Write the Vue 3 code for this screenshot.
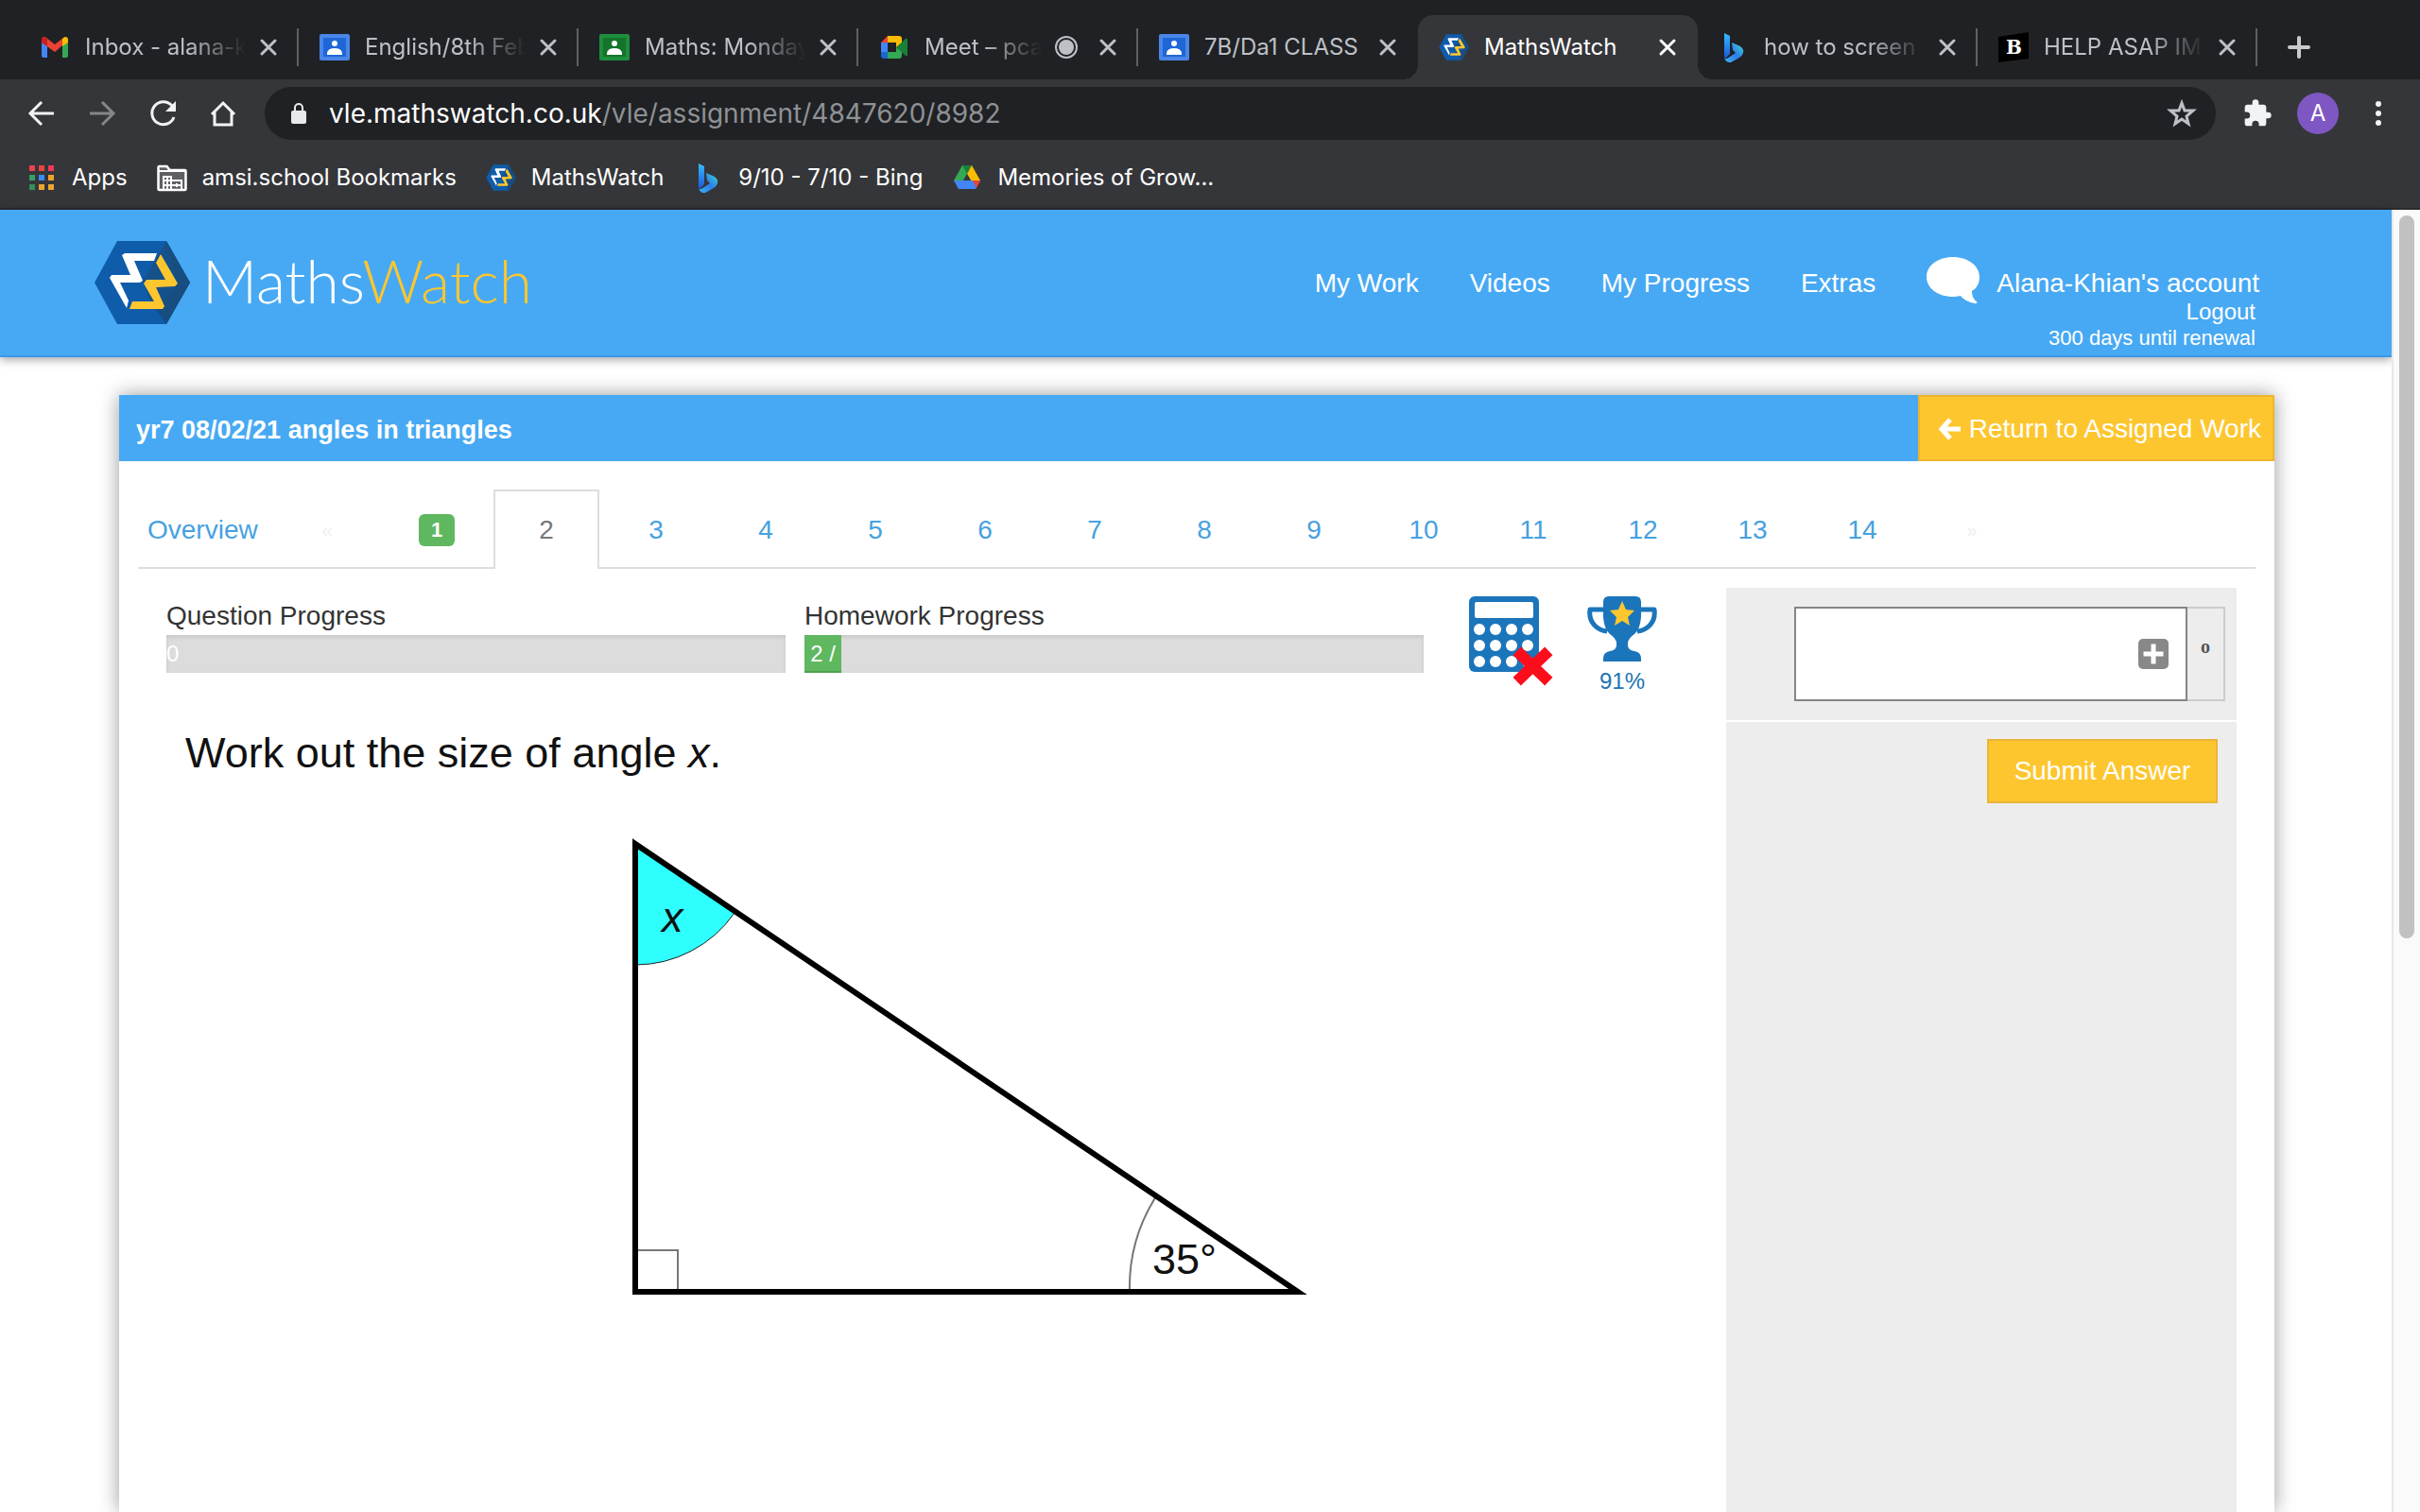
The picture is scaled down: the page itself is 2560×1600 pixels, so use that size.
<script setup>
import { ref } from 'vue'

const tabs = [
  { title: 'Inbox - alana-k', icon: 'gmail', fade: true },
  { title: 'English/8th Feb', icon: 'class-blue', fade: true },
  { title: 'Maths: Monday', icon: 'class-green', fade: true },
  { title: 'Meet – pca', icon: 'meet', fade: true, recording: true },
  { title: '7B/Da1 CLASS', icon: 'class-blue' },
  { title: 'MathsWatch', icon: 'maths', active: true },
  { title: 'how to screen', icon: 'bing', fade: true },
  { title: 'HELP ASAP IM', icon: 'brainly', fade: true },
]

const bookmarks = [
  { title: 'Apps', icon: 'apps' },
  { title: 'amsi.school Bookmarks', icon: 'folder' },
  { title: 'MathsWatch', icon: 'maths' },
  { title: '9/10 - 7/10 - Bing', icon: 'bing' },
  { title: 'Memories of Grow...', icon: 'drive' },
]

const menu = ['My Work', 'Videos', 'My Progress', 'Extras']
const questions = Array.from({ length: 14 }, (_, i) => i + 1)
const current = 2
const answer = ref('')
const progress = [
  { label: 'Question Progress', text: '0', percent: 0 },
  { label: 'Homework Progress', text: '2 /', percent: 6 },
]
const keys = [0, 1, 2, 3, 4, 5, 6, 7, 8, 9, 10, 11]
const appColors = ['#ea4350', '#e8453c', '#f2385a', '#34a065', '#3b8cf0', '#f0a030', '#34905a', '#eda52c', '#eda52c']
</script>

<template>
  <div class="window">
    <svg class="defs" aria-hidden="true">
      <defs>
        <linearGradient id="bingStem" x1="0" y1="0" x2="0" y2="1">
          <stop offset="0" stop-color="#37bdff" />
          <stop offset="1" stop-color="#1b56d8" />
        </linearGradient>
        <linearGradient id="bingBowl" x1="0" y1="1" x2="1" y2="0">
          <stop offset="0" stop-color="#3fb4f5" />
          <stop offset="0.5" stop-color="#2b7de9" />
          <stop offset="1" stop-color="#3fdcd0" />
        </linearGradient>
        <symbol id="gmail" viewBox="0 0 32 32">
          <path d="M2 9v16a2 2 0 0 0 2 2h4V13z" fill="#4285f4" />
          <path d="M30 9v16a2 2 0 0 1-2 2h-4V13z" fill="#34a853" />
          <path d="M2 8c0-3 3-4 5-2l9 7 9-7-1 8-8 7-14-10z" fill="#ea4335" />
          <path d="M24 7l1-1c2-2 5-1 5 2v3l-6 4z" fill="#fbbc04" />
          <path d="M8 7L7 6C5 4 2 5 2 8v3l6 4z" fill="#c5221f" />
        </symbol>
        <symbol id="class-blue" viewBox="0 0 32 32">
          <rect y="2" width="32" height="28" rx="2" fill="#4a86e8" />
          <rect x="4" y="6" width="24" height="20" fill="#1f66d6" />
          <circle cx="16" cy="12" r="3" fill="#fff" />
          <path d="M8 24v-2q1-5 8-5t8 5v2z" fill="#fff" />
        </symbol>
        <symbol id="class-green" viewBox="0 0 32 32">
          <rect y="2" width="32" height="28" rx="2" fill="#1e8e3e" />
          <rect x="4" y="6" width="24" height="20" fill="#14742c" />
          <circle cx="16" cy="12" r="3" fill="#fff" />
          <path d="M8 24v-2q1-5 8-5t8 5v2z" fill="#fff" />
        </symbol>
        <symbol id="meet" viewBox="0 0 32 32">
          <path d="M2 11l7-7v7z" fill="#ea4335" />
          <path d="M2 11h7v10H2z" fill="#4285f4" />
          <path d="M2 21h7v7H5q-3 0-3-3z" fill="#1967d2" />
          <path d="M9 4h12q3 0 3 3v8l-6 1v-5H9z" fill="#fbbc04" />
          <path d="M9 21h9v-5l6 1v8q0 3-3 3H9z" fill="#34a853" />
          <path d="M18 16l10-9q2-1 2 1v16q0 2-2 1z" fill="#188038" />
        </symbol>
        <symbol id="maths" viewBox="0 0 102 90">
          <path d="M25 1H77L102 45 77 89H25L1 45z" fill="#0f5cab" />
          <path d="M77 1L102 45 77 89 69 74 88 47z" fill="#184e80" />
          <path d="M77 1L52 43 60 66 77 89 102 45z" fill="#184e80" opacity=".75" />
          <path d="M30 16l3-2h34l-3 8H43l9 21-3 2H28l9 19-2 8-18-32 2-3h20z" fill="#fff" />
          <path d="M71 15l-5 9 10 18H56l-3 4 11 19H41l-3 8h35l2-3-9-20 20-1 3-3z" fill="#fdc62f" />
        </symbol>
        <symbol id="bing" viewBox="0 0 32 32">
          <path d="M6 1l6 3v19l-5 5q-1-1-1-3z" fill="url(#bingStem)" />
          <path d="M14 11l9 4q4 3 3 7-1 3-4 5l-9 5q-4 1-7-4 2 1 6-2l6-4-3-3z" fill="url(#bingBowl)" />
        </symbol>
        <symbol id="brainly" viewBox="0 0 32 32">
          <path d="M0 5L32 0V28L0 32z" fill="#000" />
          <text x="8" y="23" class="brand-b">B</text>
        </symbol>
        <symbol id="folder" viewBox="0 0 32 32">
          <path d="M1.500 28V5q0-1 1-1h8l3 4h16q1 0 1 1v19q0 1-1 1h-27q-1 0-1-1z" fill="#5f6064" stroke="#fff" stroke-width="2.500" />
          <path d="M2 9h28" stroke="#fff" stroke-width="2" />
          <path d="M7 28V15h8v13M11 15v13M7 19h8M7 24h19M15 19h11v9M21 22v4" stroke="#fff" stroke-width="2" fill="none" />
        </symbol>
        <symbol id="drive" viewBox="0 0 32 32">
          <path d="M11 3h10L8 27 2 19z" fill="#34a853" />
          <path d="M11 3h10l-5 9z" fill="#188038" />
          <path d="M21 3l9 16H20l-4-7z" fill="#fbbc04" />
          <path d="M2 19h28l-5 9H7z" fill="#4285f4" />
          <path d="M22 19h8l-4 8z" fill="#ea4335" />
          <path d="M16 12l4 7h-8z" fill="#35363a" />
        </symbol>
        <symbol id="apps" viewBox="0 0 32 32">
          <rect v-for="(c, i) in appColors" :key="i" :x="3 + (i % 3) * 10" :y="3 + Math.floor(i / 3) * 10" width="6" height="6" :fill="c" />
        </symbol>
      </defs>
    </svg>

    <header class="chrome">
      <div class="tab-strip">
        <div v-for="(tab, i) in tabs" :key="i" class="tab" :class="{ active: tab.active, bare: i === 4 }">
          <svg class="icon"><use :href="'#' + tab.icon" /></svg>
          <span class="tab-title" :class="{ fade: tab.fade }">{{ tab.title }}</span>
          <svg v-if="tab.recording" class="record" viewBox="0 0 24 24">
            <circle cx="12" cy="12" r="11" fill="none" stroke="currentColor" stroke-width="2" />
            <circle cx="12" cy="12" r="8" fill="currentColor" />
          </svg>
          <button class="close" aria-label="Close tab">
            <svg viewBox="0 0 20 20"><path d="M3 3l14 14M17 3L3 17" /></svg>
          </button>
        </div>
        <button class="new-tab" aria-label="New tab">
          <svg viewBox="0 0 24 24"><path d="M12 2v20M2 12h20" /></svg>
        </button>
      </div>

      <div class="toolbar">
        <button class="tool" aria-label="Back">
          <svg viewBox="0 0 32 32"><path class="line" d="M29 16H4M16 4L4 16l12 12" /></svg>
        </button>
        <button class="tool dim" aria-label="Forward">
          <svg viewBox="0 0 32 32"><path class="line" d="M3 16h25M16 4l12 12-12 12" /></svg>
        </button>
        <button class="tool" aria-label="Reload">
          <svg viewBox="0 0 32 32"><path class="line" d="M28 20A12 12 0 1 1 26 8" /><path d="M30 3v11H19z" /></svg>
        </button>
        <button class="tool" aria-label="Home">
          <svg viewBox="0 0 32 32"><path class="line" d="M4 17L16 5l12 12M7 15v13h18V15" /></svg>
        </button>
        <div class="omnibox">
          <svg class="lock" viewBox="0 0 24 24">
            <rect x="4" y="9" width="16" height="14" rx="2" />
            <path d="M8 10V6a4 4 0 0 1 8 0v4" fill="none" stroke="currentColor" stroke-width="2" />
          </svg>
          <span class="url"><b>vle.mathswatch.co.uk</b>/vle/assignment/4847620/8982</span>
          <button class="star" aria-label="Bookmark this page">
            <svg viewBox="0 0 32 32"><path d="M16 5l3 8h9l-7 6 2 8-7-5-7 5 2-8-7-6h9z" /></svg>
          </button>
        </div>
        <div class="tools-right">
          <button class="tool" aria-label="Extensions">
            <svg viewBox="0 0 24 24"><path d="M20.500 11H19V7c0-1.100-.9-2-2-2h-4V3.500a2.500 2.500 0 0 0-5 0V5H4c-1.100 0-2 .9-2 2v3.800h1.500a2.700 2.700 0 0 1 0 5.400H2V20c0 1.100.9 2 2 2h3.800v-1.500a2.700 2.700 0 0 1 5.400 0V22H17c1.100 0 2-.9 2-2v-4h1.500a2.500 2.500 0 0 0 0-5z" /></svg>
          </button>
          <button class="avatar">A</button>
          <button class="tool" aria-label="Menu">
            <svg viewBox="0 0 32 32"><circle cx="16" cy="6" r="3" /><circle cx="16" cy="16" r="3" /><circle cx="16" cy="26" r="3" /></svg>
          </button>
        </div>
      </div>

      <nav class="bookmarks">
        <a v-for="b in bookmarks" :key="b.title" href="#">
          <svg class="icon"><use :href="'#' + b.icon" /></svg>{{ b.title }}
        </a>
      </nav>
    </header>

    <div class="viewport">
      <div class="page">
        <header class="site-header">
          <a class="brand" href="#">
            <svg class="brand-mark"><use href="#maths" /></svg>
            <span>Maths<em>Watch</em></span>
          </a>
          <nav class="site-nav">
            <a v-for="m in menu" :key="m" class="link" href="#">{{ m }}</a>
            <div class="account">
              <svg class="bubble" viewBox="0 0 56 50">
                <path d="M28 0c15.500 0 28 9 28 21 0 7-3 12-8 15 0 5 2 9 5 11 1 1 0 3-2 2-6-1-12-4-15-8q-4 1-8 1C12 42 0 33 0 21S12 0 28 0z" />
              </svg>
              <div class="account-links">
                <a class="link" href="#">Alana-Khian's account</a>
                <a class="logout" href="#">Logout</a>
                <span class="renewal">300 days until renewal</span>
              </div>
            </div>
          </nav>
        </header>

        <main class="card">
          <div class="card-head">
            <h1>yr7 08/02/21 angles in triangles</h1>
            <button class="return">
              <svg viewBox="0 0 24 24"><path d="M12 2L3 12l9 10M4 12h19" /></svg>
              Return to Assigned Work
            </button>
          </div>

          <nav class="questions">
            <a class="overview" href="#">Overview</a>
            <span class="q arrow">«</span>
            <a v-for="n in questions" :key="n" class="q" :class="{ current: n === current }" href="#">
              <span v-if="n === 1" class="badge">{{ n }}</span>
              <template v-else>{{ n }}</template>
            </a>
            <span class="q arrow">»</span>
          </nav>

          <div class="work">
            <section class="question">
              <div class="status">
                <div v-for="p in progress" :key="p.label" class="progress">
                  <span>{{ p.label }}</span>
                  <div class="bar" role="progressbar" :aria-label="p.label" :aria-valuenow="p.percent">
                    <div class="fill" :class="{ empty: !p.percent }" :style="{ width: p.percent + '%' }">{{ p.text }}</div>
                  </div>
                </div>
                <svg class="calculator" viewBox="0 0 90 96">
                  <rect width="74" height="80" rx="6" fill="#1b75bb" />
                  <rect x="6" y="6" width="62" height="17" rx="2" fill="#fff" />
                  <circle v-for="k in keys" :key="k" :cx="11 + (k % 4) * 17" :cy="35 + Math.floor(k / 4) * 17" r="6" fill="#fff" />
                  <path d="M55 62L80 86M80 62L55 86" stroke="#fc0d1b" stroke-width="12" stroke-linecap="square" />
                </svg>
                <div class="score">
                  <svg viewBox="0 0 76 70">
                    <path d="M18 14H4c-2 14 8 22 18 23M58 14h14c2 14-8 22-18 23" fill="none" stroke="#1b75bb" stroke-width="5" stroke-linejoin="round" />
                    <path d="M18 6q0-6 6-6h28q6 0 6 6v16q-1 13-7 18-6 4-7 9v3q0 5 7 6 7 1 7 8v3H18v-3q0-7 7-8 7-1 7-6v-3q-1-5-7-9-6-5-7-18z" fill="#1b75bb" />
                    <path d="M38 5l4 9 9 1-7 7 2 9-8-5-8 5 2-9-7-7 9-1z" fill="#fdc62f" />
                  </svg>
                  <span>91%</span>
                </div>
              </div>

              <p class="prompt">Work out the size of angle <i>x</i>.</p>

              <svg class="figure" viewBox="660 880 730 500">
                <path d="M672 891V1020A128 128 0 0 0 777 965z" fill="#2efefe" />
                <path d="M672 1020A128 128 0 0 0 777 965" fill="none" stroke="#222" stroke-width="1" />
                <path d="M672 1322H717V1366" fill="none" stroke="#777" stroke-width="2" />
                <path d="M1195 1366A180 180 0 0 1 1223 1265" fill="none" stroke="#777" stroke-width="2" />
                <path d="M672 892V1366H1373z" fill="none" stroke="#000" stroke-width="6" />
                <text x="700" y="985" class="angle-x">x</text>
                <text x="1219" y="1347">35°</text>
              </svg>
            </section>

            <aside class="answer">
              <div class="answer-row">
                <div class="field">
                  <input v-model="answer" type="text" aria-label="Answer" />
                  <button class="plus" aria-label="Open keypad">
                    <svg viewBox="0 0 32 32"><path d="M16 5.500v21M5.500 16h21" /></svg>
                  </button>
                </div>
                <span class="unit">o</span>
              </div>
              <div class="submit-row">
                <button class="submit">Submit Answer</button>
              </div>
            </aside>
          </div>
        </main>
      </div>
      <div class="scrollbar"><div class="thumb"></div></div>
    </div>
  </div>
</template>

<style>
body {
  margin: 0;
  background: #fff;
}
</style>

<style scoped>
.window {
  display: flex;
  flex-direction: column;
  height: 100vh;
  overflow: hidden;
  font-family: "Liberation Sans", Arial, sans-serif;
  font-size: 28px;
  line-height: 32px;
  color: #333;
}
.defs {
  position: absolute;
  width: 0;
  height: 0;
}
.brand-b {
  font: bold 20px "DejaVu Serif", serif;
  fill: #fff;
}
a {
  color: inherit;
  text-decoration: none;
}
button {
  display: flex;
  align-items: center;
  justify-content: center;
  margin: 0;
  padding: 0;
  border: 0;
  background: none;
  color: inherit;
  font: inherit;
}
.icon {
  flex: none;
  width: 32px;
  height: 32px;
}

/* Browser chrome */
.chrome {
  flex: none;
  background: #35363a;
  color: #fff;
  font-family: Inter, "Liberation Sans", sans-serif;
  font-size: 24px;
}
.tab-strip {
  display: flex;
  box-sizing: border-box;
  height: 84px;
  padding: 16px 0 0 20px;
  background: #202124;
}
.tab {
  position: relative;
  display: flex;
  flex: 0 1 296px;
  align-items: center;
  box-sizing: border-box;
  min-width: 0;
  padding: 0 22px;
  color: #bdc1c6;
}
.tab::after {
  content: "";
  position: absolute;
  right: 0;
  top: 14px;
  width: 2px;
  height: 40px;
  background: #5f6165;
}
.tab.bare::after {
  display: none;
}
.tab.active {
  border-radius: 16px 16px 0 0;
  background: #35363a;
  color: #fff;
}
.tab.active::before,
.tab.active::after {
  content: "";
  position: absolute;
  top: auto;
  bottom: 0;
  width: 16px;
  height: 16px;
}
.tab.active::before {
  left: -16px;
  background: radial-gradient(circle at 0 0, #202124 16px, #35363a 16px);
}
.tab.active::after {
  right: -16px;
  background: radial-gradient(circle at 100% 0, #202124 16px, #35363a 16px);
}
.tab-title {
  flex: 1;
  min-width: 0;
  margin: 0 14px 0 16px;
  overflow: hidden;
  white-space: nowrap;
}
.fade {
  mask-image: linear-gradient(to left, transparent, #000 60px);
}
.record {
  flex: none;
  width: 24px;
  height: 24px;
  margin-right: 22px;
}
.close svg {
  width: 20px;
  height: 20px;
  fill: none;
  stroke: currentColor;
  stroke-width: 3;
  stroke-linecap: round;
}
.new-tab {
  margin-left: 32px;
  color: #c8cacd;
}
.new-tab svg {
  width: 24px;
  height: 24px;
  fill: none;
  stroke: currentColor;
  stroke-width: 4;
  stroke-linecap: round;
}
.toolbar {
  display: flex;
  align-items: center;
  gap: 24px;
  height: 72px;
  padding: 0 24px;
}
.tool,
.star {
  flex: none;
  width: 40px;
  height: 40px;
  color: #f1f3f4;
}
.tool svg,
.star svg {
  width: 32px;
  height: 32px;
  fill: currentColor;
}
.tool .line {
  fill: none;
  stroke: currentColor;
  stroke-width: 3;
}
.tool.dim {
  color: #85868a;
}
.omnibox {
  display: flex;
  flex: 1;
  align-items: center;
  height: 56px;
  padding: 0 16px 0 24px;
  border-radius: 28px;
  background: #202124;
}
.lock {
  flex: none;
  width: 24px;
  height: 24px;
  margin-right: 20px;
  fill: #e8eaed;
  color: #e8eaed;
}
.url {
  flex: 1;
  color: #8e9195;
  font-size: 28px;
}
.url b {
  color: #fff;
  font-weight: 400;
}
.star svg path {
  fill: none;
  stroke: #bdc1c6;
  stroke-width: 3;
}
.tools-right {
  display: flex;
  align-items: center;
  gap: 22px;
}
.avatar {
  width: 44px;
  height: 44px;
  border-radius: 50%;
  background: #7e57c2;
}
.bookmarks {
  display: flex;
  align-items: center;
  gap: 31px;
  box-sizing: border-box;
  height: 66px;
  padding: 0 28px;
  border-bottom: 2px solid #2a2b2d;
}
.bookmarks a {
  display: flex;
  align-items: center;
  gap: 16px;
}

/* Page */
.viewport {
  display: flex;
  flex: 1;
  min-height: 0;
}
.page {
  display: flex;
  flex: 1;
  flex-direction: column;
  gap: 40px;
  min-width: 0;
}
.scrollbar {
  box-sizing: border-box;
  width: 30px;
  padding: 6px;
  border-left: 2px solid #e8e8e8;
  background: #fafafa;
}
.thumb {
  width: 16px;
  height: 56%;
  border-radius: 8px;
  background: #c1c1c1;
}
.site-header {
  display: flex;
  align-items: center;
  justify-content: space-between;
  box-sizing: border-box;
  height: 156px;
  padding: 0 140px 0 98px;
  border-bottom: 2px solid #3a9ae8;
  background: #47a9f3;
  box-shadow: 0 2px 10px rgba(0, 0, 0, 0.4);
  color: #fff;
}
.brand {
  display: flex;
  align-items: center;
  gap: 12px;
  font-family: Lato, sans-serif;
  font-size: 64px;
  font-weight: 300;
  line-height: 72px;
}
.brand span {
  padding-bottom: 4px;
}
.brand em {
  color: #fdc62f;
  font-style: normal;
}
.brand-mark {
  width: 104px;
  height: 90px;
}
.site-nav {
  display: flex;
  align-self: flex-start;
  align-items: flex-start;
  gap: 54px;
  padding-top: 50px;
}
.link {
  padding-top: 12px;
}
.account {
  display: flex;
  gap: 18px;
}
.bubble {
  width: 56px;
  height: 50px;
  fill: #fff;
}
.account-links {
  display: flex;
  flex-direction: column;
  align-items: flex-end;
}
.logout,
.renewal {
  padding-right: 4px;
  line-height: 28px;
}
.logout {
  font-size: 24px;
}
.renewal {
  font-size: 22px;
}
.card {
  display: flex;
  flex: 1;
  flex-direction: column;
  margin: 0 124px 0 126px;
  background: #fff;
  box-shadow: 0 0 20px rgba(0, 0, 0, 0.4);
}
.card-head {
  display: flex;
  justify-content: space-between;
  height: 70px;
  background: #47a9f3;
  color: #fff;
}
.card-head h1 {
  margin: 0;
  padding-left: 18px;
  font-size: 27px;
  line-height: 74px;
}
.return {
  gap: 8px;
  padding: 2px 12px 0 20px;
  border: 2px solid #eeb430;
  background: #fdc62f;
  color: #fff;
}
.return svg {
  width: 24px;
  height: 24px;
  fill: none;
  stroke: currentColor;
  stroke-width: 5;
}
.questions {
  display: flex;
  gap: 4px;
  margin: 30px 20px 0;
  border-bottom: 2px solid #ddd;
  color: #47a1e0;
  line-height: 78px;
}
.overview {
  width: 140px;
  box-sizing: border-box;
  padding: 4px 0 0 10px;
}
.q {
  box-sizing: border-box;
  width: 112px;
  padding-top: 4px;
  text-align: center;
}
.arrow {
  color: #eee;
  font-size: 20px;
}
.current {
  margin-bottom: -2px;
  padding-top: 2px;
  border: 2px solid #ddd;
  border-bottom: 0;
  background: #fff;
  color: #777;
}
.badge {
  display: block;
  width: 38px;
  margin: 22px auto 0;
  border-radius: 6px;
  background: #5fb760;
  color: #fff;
  font-size: 22px;
  font-weight: 700;
  line-height: 34px;
}
.work {
  display: flex;
  flex: 1;
  gap: 70px;
  padding: 20px 40px 0 50px;
}
.question {
  flex: 1;
}
.status {
  display: flex;
  gap: 20px;
  margin-right: -48px;
}
.progress {
  flex: 1;
  padding-top: 14px;
}
.bar {
  height: 40px;
  margin-top: 4px;
  background: #dcdcdc;
  box-shadow: inset 0 2px 4px rgba(0, 0, 0, 0.1);
}
.fill {
  box-sizing: border-box;
  height: 40px;
  background: #5fb760;
  box-shadow: inset 0 -2px 0 #50a152;
  color: #fff;
  font-size: 24px;
  line-height: 40px;
  text-align: center;
  white-space: nowrap;
}
.fill.empty {
  box-shadow: none;
}
.calculator {
  width: 90px;
  height: 96px;
  margin: 9px 14px 0 28px;
}
.score {
  display: flex;
  flex-direction: column;
  align-items: center;
  width: 76px;
  margin: 9px 50px 0 0;
  color: #2173b4;
  font-size: 24px;
}
.score svg {
  width: 76px;
  height: 70px;
  margin-bottom: 4px;
}
.prompt {
  margin: 32px 20px 0;
  color: #111;
  font-size: 45px;
  line-height: 56px;
}
.figure {
  display: block;
  width: 730px;
  height: 500px;
  margin: 56px 0 0 484px;
  font-size: 45px;
  fill: #111;
}
.angle-x {
  font-style: italic;
}
.answer {
  flex: none;
  width: 540px;
  background: #ededed;
}
.answer-row {
  display: flex;
  justify-content: flex-end;
  padding: 20px 12px;
  border-bottom: 2px solid #fff;
}
.field {
  position: relative;
}
.field input {
  display: block;
  box-sizing: border-box;
  width: 416px;
  height: 100px;
  padding: 0 64px 0 16px;
  border: 2px solid #858585;
  border-radius: 0;
  background: #fff;
  font: inherit;
}
.plus {
  position: absolute;
  top: 34px;
  right: 20px;
  width: 32px;
  height: 32px;
  border-radius: 5px;
  background: #888;
}
.plus svg {
  width: 32px;
  height: 32px;
  fill: none;
  stroke: #fff;
  stroke-width: 5;
}
.unit {
  box-sizing: border-box;
  width: 40px;
  border: 2px solid #ccc;
  border-left: 0;
  color: #555;
  font: bold 20px/80px "Liberation Serif", serif;
  text-align: center;
}
.submit-row {
  display: flex;
  justify-content: flex-end;
  padding: 18px 20px;
}
.submit {
  width: 244px;
  height: 68px;
  border: 2px solid #e9b637;
  background: #fdc62f;
  color: #fff;
}
</style>
